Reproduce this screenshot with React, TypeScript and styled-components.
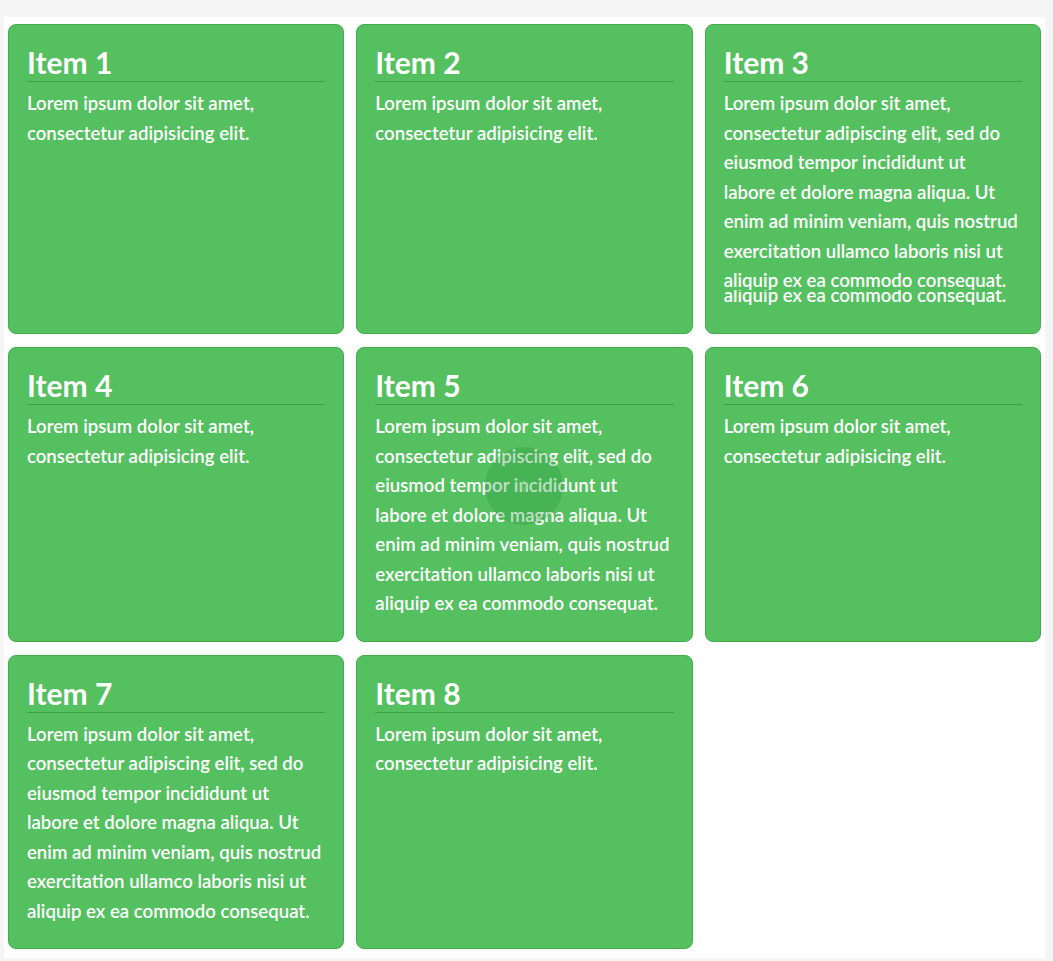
import React from "react";
import styled, { createGlobalStyle } from "styled-components";

const Global = createGlobalStyle`
  html, body { margin: 0; padding: 0; }
  body {
    background: #f5f5f5;
    font-family: Lato, "Open Sans", sans-serif;
  }
`;

const Page = styled.main`
  margin: 17px 8px 4px 4px;
  background: #ffffff;
  padding: 7px 4px 9px 4px;
  display: grid;
  grid-template-columns: repeat(3, 1fr);
  column-gap: 12px;
  row-gap: 13px;
`;

const Card = styled.section`
  position: relative;
  background: #54c05f;
  border: 1px solid #43ad4d;
  border-radius: 8px;
  padding: 0 18px 22px 18px;
  color: #ffffff;
  display: flex;
  flex-direction: column;
`;

const Title = styled.h2`
  margin: 0;
  font-family: Lato, sans-serif;
  font-weight: 700;
  font-size: 30px;
  line-height: 38px;
  padding-top: 18px;
  border-bottom: 1px solid #3b9f45;
`;

const Body = styled.p`
  margin: 7px 0 0 0;
  padding-right: 4px;
  font-family: Lato, sans-serif;
  font-weight: 600;
  font-size: 18.6px;
  line-height: 29.5px;
`;

const Ghost = styled.div`
  margin-top: -6px;
  height: 21.5px;
  overflow: hidden;
  font-family: Lato, sans-serif;
  font-weight: 600;
  font-size: 18.6px;
  line-height: 16px;
  white-space: nowrap;
`;

const GhostLine = styled.span`
  display: block;
  margin-top: -3px;
`;

const Spinner = styled.div`
  position: absolute;
  left: 50%;
  top: 138px;
  width: 78px;
  height: 78px;
  margin: -39px 0 0 -39px;
  border-radius: 50%;
  background: rgba(40, 150, 60, 0.3);
  display: flex;
  align-items: center;
  justify-content: center;
`;

const SHORT = "Lorem ipsum dolor sit amet, consectetur adipisicing elit.";
const LONG =
  "Lorem ipsum dolor sit amet, consectetur adipiscing elit, sed do eiusmod tempor incididunt ut labore et dolore magna aliqua. Ut enim ad minim veniam, quis nostrud exercitation ullamco laboris nisi ut aliquip ex ea commodo consequat.";

type Item = { id: number; long?: boolean; ghost?: boolean; spinner?: boolean };

const items: Item[] = [
  { id: 1 },
  { id: 2 },
  { id: 3, long: true, ghost: true },
  { id: 4 },
  { id: 5, long: true, spinner: true },
  { id: 6 },
  { id: 7, long: true },
  { id: 8 },
];

export default function App() {
  return (
    <>
      <Global />
      <Page>
        {items.map((it) => (
          <Card key={it.id}>
            <Title>Item {it.id}</Title>
            <Body>{it.long ? LONG : SHORT}</Body>
            {it.ghost && (
              <Ghost aria-hidden="true">
                <GhostLine>aliquip ex ea commodo consequat.</GhostLine>
              </Ghost>
            )}
            {it.spinner && (
              <Spinner>
                <svg width="10" height="16" viewBox="0 0 10 16">
                  <path d="M5 1 L9 7 H1 Z M5 15 L9 9 H1 Z" fill="rgba(120,220,130,0.35)" />
                </svg>
              </Spinner>
            )}
          </Card>
        ))}
      </Page>
    </>
  );
}
